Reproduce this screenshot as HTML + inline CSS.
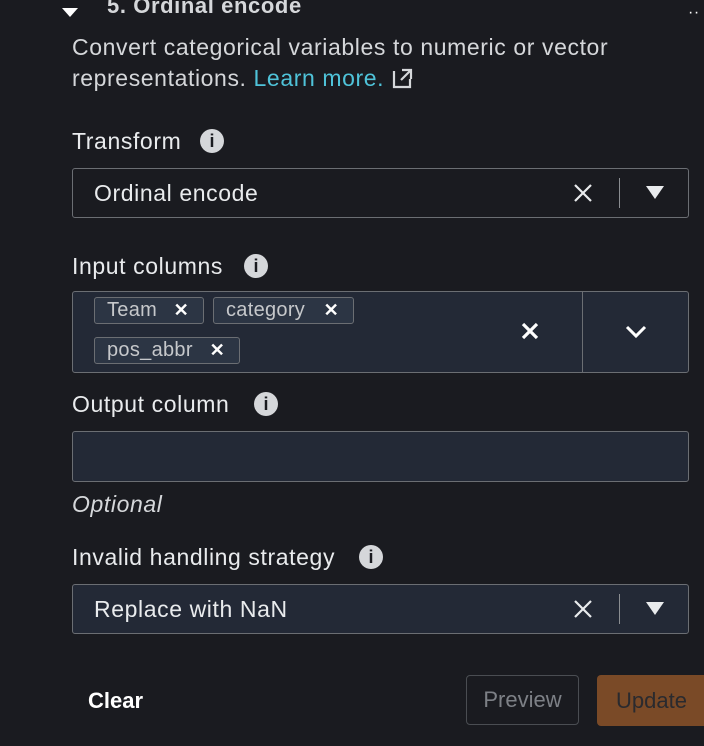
<!DOCTYPE html>
<html><head><style>
body{margin:0;width:704px;height:746px;background:#1a1b20;font-family:"Liberation Sans",sans-serif;color:#e9ebed;overflow:hidden;position:relative;letter-spacing:0.6px}
.a{position:absolute}
.lbl{font-size:23px;color:#e9ebed}
.box{position:absolute;left:72px;width:615px;border:1px solid #6b6e73;border-radius:3px}
.info{position:absolute;width:24px;height:24px;border-radius:50%;background:#d5d7da;color:#1a1b20;font:bold 18px "Liberation Sans",sans-serif;text-align:center;line-height:24px;letter-spacing:0}
.tag{position:absolute;height:27px;border:1px solid #6b6e73;border-radius:3px;background:#2c3544;color:#c6c8cb;font-size:20px;line-height:25px;padding-left:12px;box-sizing:border-box;letter-spacing:0.3px}
.tag b{position:absolute;right:14px;top:0;color:#fff;font-size:18px}
</style></head><body>
<svg class="a" style="left:62px;top:8px" width="16" height="10"><path d="M0 0H16L8 9Z" fill="#fff"/></svg>
<div class="a" style="left:107px;top:-7px;font-size:22px;font-weight:bold;color:#d5d7da">5. Ordinal encode</div>
<div class="a" style="left:688px;top:4px;font-size:16px;color:#fff">··</div>
<div class="a" style="left:72px;top:32px;font-size:23px;line-height:31px;color:#d5d7da;width:640px">Convert categorical variables to numeric or vector<br>representations. <span style="color:#4fc3d9">Learn more.</span> <svg width="24" height="24" style="vertical-align:-4px"><path d="M3 5V21H19V13M11 4H20V13M20 4L10 14" stroke="#d5d7da" stroke-width="2.2" fill="none"/></svg></div>

<div class="a lbl" style="left:72px;top:128px">Transform</div>
<div class="info" style="left:200px;top:129px">i</div>
<div class="box" style="top:168px;height:48px"></div>
<div class="a" style="left:94px;top:180px;font-size:23px;color:#e9ebed">Ordinal encode</div>
<svg class="a" style="left:573px;top:183px" width="20" height="20"><path d="M2 2L18 18M18 2L2 18" stroke="#e9ebed" stroke-width="2.2"/></svg>
<div class="a" style="left:619px;top:178px;width:1px;height:30px;background:#8a8d91"></div>
<svg class="a" style="left:646px;top:186px" width="18" height="14"><path d="M0 0H18L9 13Z" fill="#e9ebed"/></svg>

<div class="a lbl" style="left:72px;top:253px">Input columns</div>
<div class="info" style="left:244px;top:254px">i</div>
<div class="box" style="top:291px;height:80px;background:#232936"></div>
<div class="a" style="left:582px;top:292px;width:1px;height:80px;background:#6b6e73"></div>
<div class="tag" style="left:94px;top:297px;width:110px">Team<b>✕</b></div>
<div class="tag" style="left:213px;top:297px;width:141px">category<b>✕</b></div>
<div class="tag" style="left:94px;top:337px;width:146px">pos_abbr<b>✕</b></div>
<svg class="a" style="left:520px;top:321px" width="20" height="20"><path d="M3 3L17 17M17 3L3 17" stroke="#fff" stroke-width="3.2"/></svg>
<svg class="a" style="left:625px;top:325px" width="22" height="14"><path d="M2 2L11 11L20 2" stroke="#fff" stroke-width="3" fill="none"/></svg>

<div class="a lbl" style="left:72px;top:391px">Output column</div>
<div class="info" style="left:254px;top:392px">i</div>
<div class="box" style="top:431px;height:49px;background:#232936"></div>
<div class="a" style="left:72px;top:491px;font-size:23px;font-style:italic;color:#d5d7da">Optional</div>

<div class="a lbl" style="left:72px;top:544px">Invalid handling strategy</div>
<div class="info" style="left:359px;top:545px">i</div>
<div class="box" style="top:584px;height:48px;background:#232936"></div>
<div class="a" style="left:94px;top:596px;font-size:23px;color:#e9ebed">Replace with NaN</div>
<svg class="a" style="left:573px;top:599px" width="20" height="20"><path d="M2 2L18 18M18 2L2 18" stroke="#e9ebed" stroke-width="2.2"/></svg>
<div class="a" style="left:619px;top:594px;width:1px;height:30px;background:#8a8d91"></div>
<svg class="a" style="left:646px;top:602px" width="18" height="14"><path d="M0 0H18L9 13Z" fill="#e9ebed"/></svg>

<div class="a" style="left:88px;top:688px;font-size:22px;font-weight:bold;color:#fff;letter-spacing:0">Clear</div>
<div class="a" style="left:466px;top:675px;width:113px;height:50px;border:1px solid #4a4d52;border-radius:4px;box-sizing:border-box;color:#7d8086;font-size:22px;line-height:48px;text-align:center;letter-spacing:0">Preview</div>
<div class="a" style="left:597px;top:675px;width:120px;height:51px;background:#7a4a27;border-radius:4px;color:#2a2a2e;font-size:22px;line-height:51px;padding-left:19px;box-sizing:border-box;letter-spacing:0">Update</div>
</body></html>
